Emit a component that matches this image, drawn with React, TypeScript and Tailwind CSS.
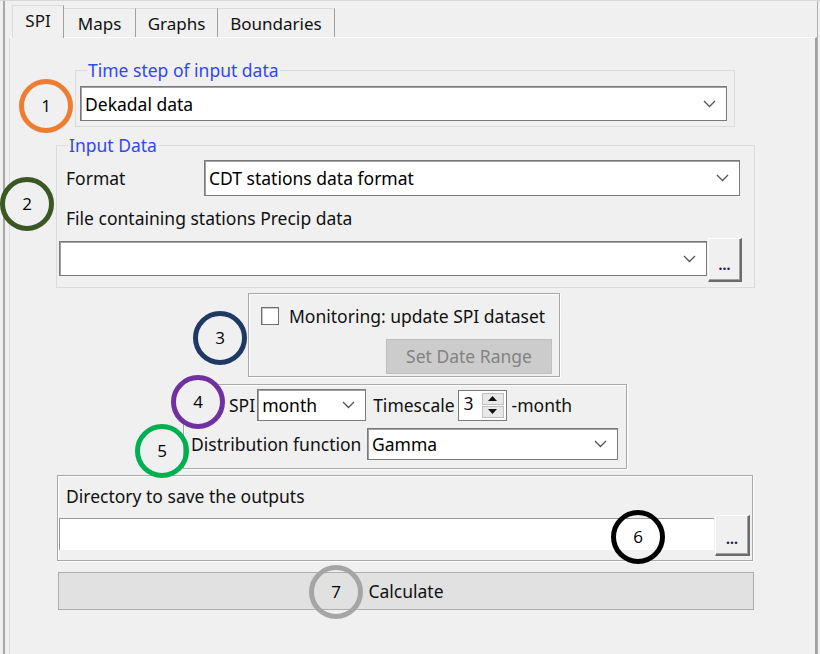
import React from 'react';

const Chevron: React.FC = () => (
  <svg width="13" height="8" viewBox="0 0 13 8" className="shrink-0" aria-hidden>
    <polyline points="1,1 6.5,6.5 12,1" fill="none" stroke="#555" strokeWidth="1.3" />
  </svg>
);

const Combo: React.FC<{ value?: string; className?: string }> = ({ value = '', className = '' }) => (
  <div
    className={`flex items-center justify-between bg-white border border-[#7a7a7a] shadow-[inset_1px_1px_0_#a0a0a0] pl-[4px] pr-[10px] ${className}`}
  >
    <span className="text-black leading-[20px]">{value}</span>
    <Chevron />
  </div>
);

const DotsButton: React.FC<{ className?: string }> = ({ className = '' }) => (
  <div
    className={`flex items-end justify-center pb-[10px] bg-[#f0f0f0] border-t border-l border-white border-r-2 border-b-2 border-r-[#6b6b6b] border-b-[#6b6b6b] shadow-[inset_-1px_-1px_0_#a0a0a0] text-[#202050] text-[14px] font-bold leading-[10px] ${className}`}
  >
    ...
  </div>
);

const Tab: React.FC<{ label: string; width: string; selected?: boolean }> = ({ label, width, selected }) =>
  selected ? (
    <div
      className={`${width} h-[33px] -mb-px z-10 flex items-center justify-center bg-[#f0f0f0] border-l border-t border-[#dcdcdc] border-r border-r-[#a0a0a0] pb-[2px]`}
    >
      {label}
    </div>
  ) : (
    <div
      className={`${width} h-[29px] flex items-center justify-center border-t border-[#dcdcdc] border-r border-r-[#a0a0a0] pt-[1px]`}
    >
      {label}
    </div>
  );

const Marker: React.FC<{ n: number; pos: string; color: string; filled?: boolean }> = ({ n, pos, color, filled }) => (
  <div
    className={`absolute ${pos} w-[54px] h-[54px] rounded-full border-[5px] ${color} ${filled ? 'bg-[#f0f0f0]' : ''} flex items-center justify-center font-['Open_Sans',sans-serif] text-[17px] text-black`}
  >
    {n}
  </div>
);

export default function App() {
  return (
    <div className="relative w-[820px] h-[654px] overflow-hidden bg-[#f0f0f0] border-t border-[#d8d8d8] flex font-['Noto_Sans',sans-serif] text-[17.5px] text-[#111]">
      <div className="w-[3px]" />
      <div className="w-[2px] bg-[#a8a8a8]" />
      <div className="w-[4px]" />

      <div className="flex-1 flex flex-col mr-[2px] border-r border-[#b0b0b0]">
        {/* tab strip */}
        <div className="h-[36px] flex items-end pl-[3px] text-[17px]">
          <Tab label="SPI" width="w-[52px]" selected />
          <Tab label="Maps" width="w-[72px]" />
          <Tab label="Graphs" width="w-[82px]" />
          <Tab label="Boundaries" width="w-[117px]" />
        </div>

        {/* tab page */}
        <div className="flex-1 flex flex-col border-t border-white border-l border-l-[#dcdcdc] border-r-2 border-r-[#a0a0a0]">
          <fieldset className="ml-[65px] mt-[22px] w-[660px] border border-[#dcdcdc] pb-[5px]">
            <legend className="ml-[11px] px-[1px] leading-[20px] text-[#3048ee]">Time step of input data</legend>
            <Combo value="Dekadal data" className="ml-[4px] mt-[6px] w-[647px] h-[35px]" />
          </fieldset>

          <fieldset className="ml-[46px] mt-[8px] w-[699px] border border-[#dcdcdc] pb-[5px]">
            <legend className="ml-[11px] px-[1px] leading-[20px] text-[#3048ee]">Input Data</legend>
            <div className="flex items-center mt-[5px] h-[36px]">
              <span className="ml-[9px] w-[138px] leading-[20px]">Format</span>
              <Combo value="CDT stations data format" className="w-[536px] h-[36px]" />
            </div>
            <div className="ml-[9px] mt-[12px] leading-[20px]">File containing stations Precip data</div>
            <div className="flex items-start mt-[10px]">
              <Combo className="ml-[2px] mt-[3px] w-[648px] h-[35px]" />
              <DotsButton className="ml-[1px] w-[34px] h-[44px]" />
            </div>
          </fieldset>

          <div className="ml-[238px] mt-[5px] w-[312px] h-[84px] border border-[#a8a8a8] shadow-[inset_1px_1px_0_#ffffff,1px_1px_0_#ffffff] flex flex-col">
            <div className="flex items-center mt-[12px] ml-[12px]">
              <div className="w-[18px] h-[18px] bg-white border border-[#6e6e6e] shadow-[inset_1px_1px_0_#c8c8c8]" />
              <span className="ml-[10px] leading-[20px]">Monitoring: update SPI dataset</span>
            </div>
            <div className="self-end mr-[7px] mt-[13px] w-[166px] h-[35px] bg-[#cccccc] border border-[#bfbfbf] flex items-center justify-center text-[#838383]">
              Set Date Range
            </div>
          </div>

          <div className="ml-[173px] mt-[7px] w-[444px] h-[85px] border border-[#a8a8a8] shadow-[inset_1px_1px_0_#ffffff,1px_1px_0_#ffffff] flex flex-col">
            <div className="flex items-center mt-[4px] h-[32px]">
              <span className="ml-[45px] leading-[20px]">SPI</span>
              <Combo value="month" className="ml-[2px] w-[109px] h-[32px]" />
              <span className="ml-[7px] leading-[20px]">Timescale</span>
              <div className="ml-[3px] w-[49px] h-[31px] bg-white border border-[#7a7a7a] flex items-center justify-between pl-[5px] pr-[2px]">
                <span className="leading-[20px] -mt-[4px]">3</span>
                <div className="flex flex-col gap-[1px]">
                  <div className="w-[22px] h-[12px] bg-[#e8e8e8] border border-[#c0c0c0] flex items-center justify-center">
                    <svg width="9" height="5" viewBox="0 0 9 5" aria-hidden>
                      <polygon points="0,5 4.5,0 9,5" fill="#111" />
                    </svg>
                  </div>
                  <div className="w-[22px] h-[12px] bg-[#e8e8e8] border border-[#c0c0c0] flex items-center justify-center">
                    <svg width="9" height="5" viewBox="0 0 9 5" aria-hidden>
                      <polygon points="0,0 4.5,5 9,0" fill="#111" />
                    </svg>
                  </div>
                </div>
              </div>
              <span className="ml-[5px] leading-[20px]">-month</span>
            </div>
            <div className="flex items-center mt-[7px] h-[32px]">
              <span className="ml-[7px] leading-[20px]">Distribution function</span>
              <Combo value="Gamma" className="ml-auto mr-[8px] w-[251px] h-[32px]" />
            </div>
          </div>

          <div className="ml-[47px] mt-[6px] w-[696px] h-[86px] border border-[#a8a8a8] shadow-[inset_1px_1px_0_#ffffff,1px_1px_0_#ffffff] flex flex-col">
            <div className="ml-[8px] mt-[10px] leading-[20px]">Directory to save the outputs</div>
            <div className="flex items-start mt-[9px]">
              <div className="ml-[1px] mt-[3px] w-[655px] h-[32px] bg-white border-t border-l border-[#9a9a9a]" />
              <DotsButton className="ml-[1px] w-[35px] h-[41px]" />
            </div>
          </div>

          <div className="ml-[48px] mt-[11px] w-[696px] h-[38px] bg-[#e1e1e1] border border-[#adadad] flex items-center justify-center">
            Calculate
          </div>
        </div>
      </div>

      <Marker n={1} pos="left-[19px] top-[78px]" color="border-[#ed7d31]" />
      <Marker n={2} pos="left-[0px] top-[176px]" color="border-[#3a5724]" filled />
      <Marker n={3} pos="left-[193px] top-[310px]" color="border-[#1f3864]" />
      <Marker n={4} pos="left-[171px] top-[374px]" color="border-[#7030a0]" filled />
      <Marker n={5} pos="left-[135px] top-[423px]" color="border-[#00b050]" />
      <Marker n={6} pos="left-[611px] top-[509px]" color="border-[#000000]" />
      <Marker n={7} pos="left-[309px] top-[564px]" color="border-[#a5a5a5]" />
    </div>
  );
}
